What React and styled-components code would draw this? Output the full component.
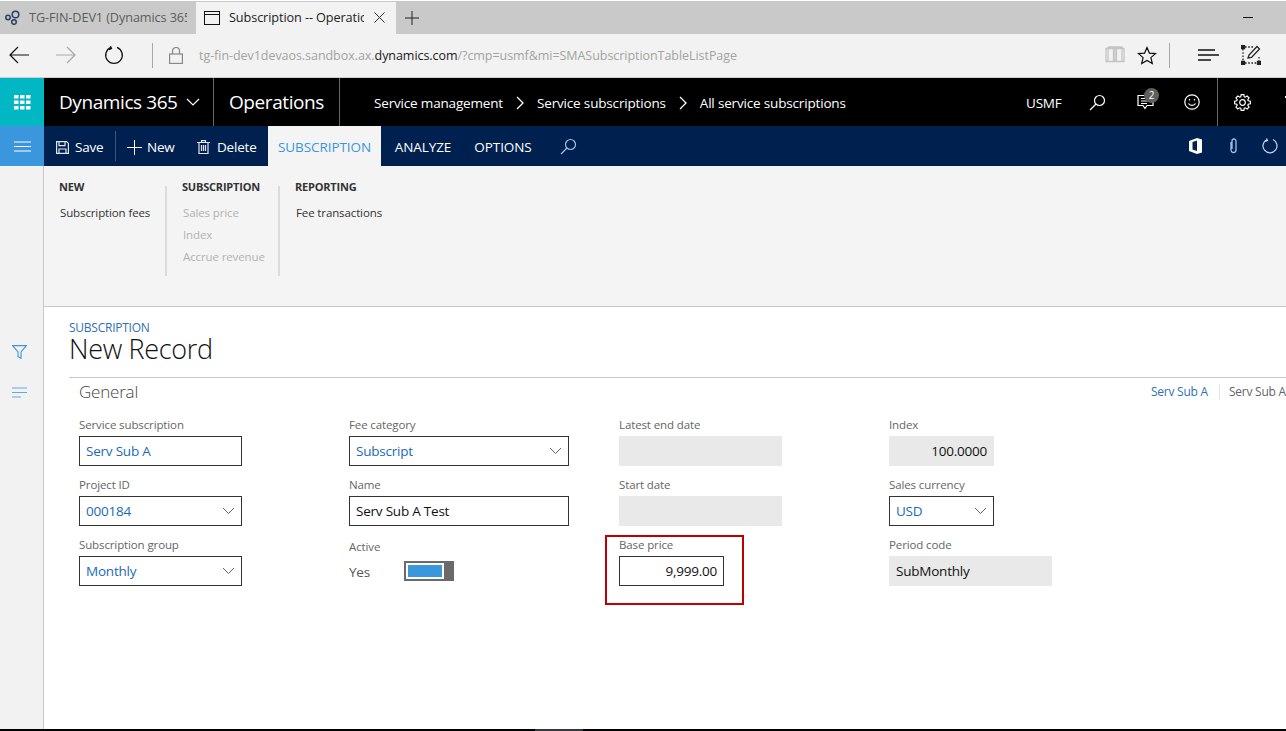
import React from 'react';
import styled, { createGlobalStyle } from 'styled-components';

const Global = createGlobalStyle`
  html, body { margin: 0; padding: 0; background: #fff; overflow: hidden; }
  body { font-family: "Open Sans", "Liberation Sans", sans-serif; }
  * { box-sizing: border-box; }
`;

const Page = styled.div`
  width: 1286px; height: 731px; display: flex; flex-direction: column; overflow: hidden; background: #fff;
`;

/* Browser chrome */
const TabStrip = styled.div`
  height: 33px; flex: none; margin-top: 1px; background: #c9c9c9; display: flex; align-items: center; position: relative;
`;
const BrowserTab = styled.div`
  height: 32px; width: ${p => p.$w}px; flex: none; display: flex; align-items: center; padding-left: ${p => p.$pad}px;
  background: ${p => (p.$active ? '#f2f2f2' : 'transparent')};
  color: ${p => (p.$active ? '#222' : '#5c5c5c')};
`;
const TabTitle = styled.span`
  width: ${p => p.$w}px; margin: -2px 0 0 ${p => p.$ml}px; overflow: hidden; white-space: nowrap;
  font-size: 12.7px; letter-spacing: -0.1px;
`;
const TabClose = styled.span`
  margin-left: 10px; display: flex;
`;
const NewTab = styled.span`
  margin-left: 9px; display: flex;
`;
const Minimize = styled.span`
  margin-left: auto; margin-right: 33px; width: 10px; height: 1px; background: #111;
`;
const NavBar = styled.div`
  height: 45px; flex: none; background: #f2f2f2; border-bottom: 1px solid #cfcfcf; display: flex; align-items: center; margin-top: -1px; padding-right: 25px;
`;
const NavSlot = styled.span`
  width: ${p => p.$w}px; flex: none; display: flex; justify-content: center; align-items: center;
`;
const NavSep = styled.span`
  width: 1px; height: 25px; background: #a8a8a8; flex: none; margin: ${p => p.$m};
`;
const Url = styled.div`
  flex: 1; font-size: 12.5px; color: #a3a3a3; letter-spacing: -0.05px; white-space: nowrap;
  b { font-weight: 400; color: #1a1a1a; }
`;

/* Dark app bars */
const AppBar = styled.div`
  height: 48px; flex: none; background: #000; color: #fff; display: flex; align-items: stretch;
`;
const Waffle = styled.div`
  width: 44px; flex: none; background: #00b7c3; display: flex; align-items: center; justify-content: center;
`;
const AppCell = styled.div`
  width: ${p => p.$w}px; flex: none; display: flex; align-items: center; padding-left: ${p => p.$pad}px;
  font-size: 19px; letter-spacing: -0.42px; border-right: 1px solid #666; white-space: nowrap;
`;
const Crumbs = styled.div`
  display: flex; align-items: center; padding: 2px 0 0 34px; font-size: 13.5px; letter-spacing: -0.17px; white-space: nowrap; flex: 1;
`;
const CrumbArrow = styled.span`
  display: flex; width: 34px; justify-content: center;
`;
const AppRight = styled.div`
  display: flex; align-items: center; width: 260px; flex: none; overflow: hidden;
`;
const AppText = styled.span`
  width: 40px; font-size: 13.5px; letter-spacing: -0.2px; flex: none; padding-top: 2px;
`;
const AppIcon = styled.span`
  width: ${p => p.$w}px; margin-left: ${p => p.$ml || 0}px; flex: none; display: flex; justify-content: center; align-self: center; position: relative;
`;
const Badge = styled.span`
  position: absolute; left: 16px; top: -6px; width: 15px; height: 15px; border-radius: 50%; background: #5f5f5f;
  color: #fff; font-size: 10px; line-height: 15px; text-align: center;
`;
const AppSep = styled.span`
  width: 1px; align-self: stretch; background: #666; flex: none;
`;

const ActionBar = styled.div`
  height: 40px; flex: none; background: #002050; color: #fff; display: flex; align-items: stretch;
`;
const Hamburger = styled.div`
  width: 44px; flex: none; background: #3a96dd; display: flex; align-items: center; justify-content: center;
`;
const Action = styled.div`
  display: flex; align-items: center; width: ${p => p.$w}px; flex: none; font-size: 13.5px; letter-spacing: -0.2px; padding: 2px 0 0 ${p => p.$pad}px; gap: ${p => p.$gap}px;
`;
const ActionSep = styled.span`
  width: 1px; height: 30px; align-self: center; background: #3d5578; flex: none;
`;
const PageTab = styled.div`
  width: ${p => p.$w}px; flex: none; display: flex; align-items: center; justify-content: center; font-size: 13.5px; letter-spacing: -0.08px; padding-top: 2px;
  background: ${p => (p.$active ? '#f4f4f4' : 'transparent')};
  color: ${p => (p.$active ? '#3a96dd' : '#fff')};
`;
const ActionRight = styled.div`
  margin-left: auto; display: flex; align-items: center;
`;

/* Body */
const Body = styled.div`
  flex: 1; display: flex; min-height: 0;
`;
const Rail = styled.div`
  width: 44px; flex: none; background: #f2f2f2; border-right: 1px solid #c8c8c8; display: flex; flex-direction: column; align-items: center; padding: 179px 5px 0 0; gap: 28px;
`;
const Main = styled.div`
  flex: 1; min-width: 0; display: flex; flex-direction: column; overflow: hidden;
`;
const Ribbon = styled.div`
  height: 141px; flex: none; background: #f4f4f4; border-bottom: 1px solid #c8c8c8; display: flex; padding: 20px 0 0 15px; align-items: flex-start;
`;
const RibbonGroup = styled.div`
  width: ${p => p.$w}px; height: 90px; flex: none; padding-left: ${p => p.$pad}px;
  border-right: ${p => (p.$sep ? '2px solid #dcdcdc' : 'none')};
`;
const RibbonHead = styled.div`
  font-size: 11px; font-weight: 700; color: #333; line-height: 16px; height: 23px; margin-top: -7px; letter-spacing: -0.2px;
`;
const RibbonItem = styled.div`
  font-size: 11.5px; line-height: 22px; letter-spacing: -0.12px; padding-left: 1px; white-space: nowrap;
  color: ${p => (p.$off ? '#b2b2b2' : '#333')};
`;
const Content = styled.div`
  flex: 1; padding: 14px 0 0 25px; position: relative;
`;
const Kicker = styled.div`
  font-size: 12px; line-height: 13px; height: 13px; color: #2f6fb7; letter-spacing: -0.25px;
`;
const Title = styled.h1`
  margin: 0; font-size: 27px; font-weight: 300; line-height: 30px; color: #111; height: 43px; letter-spacing: -0.33px;
`;
const SectionHead = styled.div`
  border-top: 1px solid #c8c8c8; height: 39px; display: flex; align-items: flex-start; padding: 0 0 0 10px; white-space: nowrap;
`;
const SectionTitle = styled.div`
  font-size: 17px; line-height: 28px; color: #444; flex: 1; font-weight: 300; letter-spacing: -0.2px;
`;
const Summary = styled.span`
  font-size: 12px; line-height: 16px; margin-top: 6px; letter-spacing: -0.25px; color: ${p => (p.$muted ? '#666' : '#2f6fb7')};
  width: ${p => p.$w}px; flex: none; overflow: hidden; padding-left: ${p => p.$pad || 1}px;
  border-left: ${p => (p.$sep ? '1px solid #e4e4e4' : 'none')};
`;
const FormGrid = styled.div`
  display: grid; grid-template-columns: repeat(4, 270px); grid-auto-rows: 60px; padding-left: 10px;
`;
const Cell = styled.div`
  position: relative;
`;
const Label = styled.div`
  font-size: 11.5px; line-height: 18px; height: 20px; color: #666; letter-spacing: -0.12px;
  padding-top: ${p => (p.$low ? '2px' : '0')};
`;
const Field = styled.div`
  width: ${p => p.$w}px; height: 30px; display: flex; align-items: center; justify-content: space-between;
  padding: 0 6px; font-size: 13.5px; letter-spacing: -0.22px;
  border: ${p => (p.$readonly ? 'none' : '1px solid #333')};
  background: ${p => (p.$readonly ? '#e9e9e9' : '#fff')};
  color: ${p => (p.$link ? '#1a6bb8' : '#111')};
  ${p => (p.$readonly ? 'padding: 0 7px;' : '')}
  ${p => (p.$right ? 'justify-content: flex-end;' : '')}
`;
const ToggleRow = styled.div`
  display: flex; align-items: center; height: 30px; font-size: 13.5px; color: #555; letter-spacing: -0.2px; margin-top: 1px;
`;
const YesText = styled.span`
  width: 55px; flex: none;
`;
const ToggleTrack = styled.div`
  width: 50px; height: 20px; background: #6a6a6a; flex: none; display: flex; margin-top: -2px;
`;
const ToggleInner = styled.div`
  width: 38px; height: 16px; margin: 2px 0 2px 2px; background: #fff; padding: 2px;
`;
const ToggleFill = styled.div`
  height: 100%; background: #3a96dd;
`;
const Highlight = styled.div`
  position: absolute; left: -14px; top: -1px; width: 139px; height: 70px; border: 2px solid #c00000; pointer-events: none;
`;
const BottomBar = styled.div`
  height: 2px; flex: none; display: flex; background: #000;
`;
const BottomThumb = styled.span`
  width: 48px; margin-left: 535px; background: #33363b;
`;

/* Drawings */
const Svg = ({ w, h, children, stroke = 'currentColor', sw = 1.2, fill = 'none' }) => (
  <svg width={w} height={h} viewBox={`0 0 ${w} ${h}`} fill={fill} stroke={stroke} strokeWidth={sw}>{children}</svg>
);
const Chevron = () => (
  <Svg w={13} h={8} stroke="#666" sw={1}><path d="M1 1l5.500 5.500L12 1" /></Svg>
);
const Search = ({ stroke = '#fff' }) => (
  <Svg w={17} h={17} stroke={stroke} sw={1.2}><circle cx="10.500" cy="6.500" r="5" /><path d="M7 10L1 16" /></Svg>
);
const gearPath = () => {
  const pts = [];
  for (let i = 0; i < 8; i++) {
    const a = (i * Math.PI) / 4;
    [[-0.3, 6], [-0.17, 8], [0.17, 8], [0.3, 6]].forEach(([d, r]) => {
      pts.push(`${(8.500 + r * Math.cos(a + d)).toFixed(2)} ${(8.500 + r * Math.sin(a + d)).toFixed(2)}`);
    });
  }
  return `M${pts.join('L')}Z`;
};

const Select = ({ w, children }) => (
  <Field $w={w} $link>{children}<Chevron /></Field>
);

export default function App() {
  return (
    <Page>
      <Global />
      <TabStrip>
        <BrowserTab $w={196} $pad={5}>
          <Svg w={15} h={15} stroke="#2c3e66" sw={1.5}>
            <circle cx="10.500" cy="4.500" r="3.300" /><circle cx="3" cy="7.500" r="2.200" /><circle cx="9" cy="12" r="2.300" />
          </Svg>
          <TabTitle $w={158} $ml={9}>TG-FIN-DEV1 (Dynamics 365 for Operations)</TabTitle>
        </BrowserTab>
        <BrowserTab $w={200} $pad={8} $active>
          <Svg w={16} h={14} stroke="#111" sw={1}><rect x="0.500" y="0.500" width="15" height="13" /><path d="M0.500 3.500h15" /></Svg>
          <TabTitle $w={135} $ml={9}>Subscription -- Operations</TabTitle>
          <TabClose><Svg w={11} h={11} stroke="#333" sw={1}><path d="M0.500 0.500l10 10M10.500 0.500l-10 10" /></Svg></TabClose>
        </BrowserTab>
        <NewTab><Svg w={14} h={14} stroke="#222" sw={1}><path d="M7 0v14M0 7h14" /></Svg></NewTab>
        <Minimize />
      </TabStrip>
      <NavBar>
        <NavSlot $w={38}><Svg w={20} h={18} stroke="#111" sw={1.2}><path d="M20 9H1M9 1L1 9l8 8" /></Svg></NavSlot>
        <NavSlot $w={56}><Svg w={20} h={18} stroke="#a8a8a8" sw={1.2}><path d="M0 9h19M11 1l8 8-8 8" /></Svg></NavSlot>
        <NavSlot $w={40}><Svg w={20} h={20} stroke="#111" sw={1.3}><path d="M7 2.400A8.300 8.300 0 1 0 13 2.400M6.500 1.200L7.500 3.500 5 4.600" /></Svg></NavSlot>
        <NavSep $m="0 0 0 18px" />
        <NavSlot $w={46}><Svg w={14} h={17} stroke="#888" sw={1.2}><rect x="0.600" y="7" width="12.800" height="9.400" /><path d="M3.500 7V4a3.500 3.500 0 0 1 7 0v3" /></Svg></NavSlot>
        <Url>tg-fin-dev1devaos.sandbox.ax.<b>dynamics.com</b>/?cmp=usmf&amp;mi=SMASubscriptionTableListPage</Url>
        <NavSlot $w={32}><Svg w={20} h={18} stroke="#c4c4c4" sw={1.3}><path d="M1 2.500h18v13H1zM3 1h14v14.500M3 1v14.500M10 1v14.500M8.500 1.500v14M11.500 1.500v14" /></Svg></NavSlot>
        <NavSlot $w={32}><Svg w={20} h={19} stroke="#111" sw={1.2}><path d="M10 1.500l2.400 5.600 6.100.5-4.600 4 1.400 6-5.300-3.200-5.300 3.200 1.400-6-4.600-4 6.100-.5z" /></Svg></NavSlot>
        <NavSep $m="0 13px 0 6px" />
        <NavSlot $w={50}><Svg w={21} h={14} stroke="#111" sw={1.3}><path d="M0 2h17M0 7h21M0 12h13" /></Svg></NavSlot>
        <NavSlot $w={8} />
        <NavSlot $w={20}><Svg w={20} h={20} stroke="#222" sw={1.3}><path d="M2 4v13M18 12v5M4 18h12M4 2h8" strokeDasharray="1.600 1.600" /><path d="M7 13l1-3 8-8.500 2.500 2.500-8 8.500z" /><path d="M0.500 0.500h3v3h-3zM0.500 16.500h3v3h-3zM16.500 16.500h3v3h-3z" fill="#222" /></Svg></NavSlot>
      </NavBar>
      <AppBar>
        <Waffle>
          <Svg w={17} h={15} stroke="none"><g fill="#fff"><rect width="4.500" height="3.500" /><rect x="6" width="4.500" height="3.500" /><rect x="12" width="4.500" height="3.500" /><rect y="5.500" width="4.500" height="3.500" /><rect x="6" y="5.500" width="4.500" height="3.500" /><rect x="12" y="5.500" width="4.500" height="3.500" /><rect y="11" width="4.500" height="3.500" /><rect x="6" y="11" width="4.500" height="3.500" /><rect x="12" y="11" width="4.500" height="3.500" /></g></Svg>
        </Waffle>
        <AppCell $w={170} $pad={15}>
          Dynamics 365
          <AppIcon $w={30}><Svg w={14} h={8} stroke="#fff" sw={1.2}><path d="M1 1l6 6 6-6" /></Svg></AppIcon>
        </AppCell>
        <AppCell $w={126} $pad={15}>Operations</AppCell>
        <Crumbs>
          Service management
          <CrumbArrow><Svg w={8} h={14} stroke="#fff" sw={1.3}><path d="M1 1l6 6-6 6" /></Svg></CrumbArrow>
          Service subscriptions
          <CrumbArrow><Svg w={8} h={14} stroke="#fff" sw={1.3}><path d="M1 1l6 6-6 6" /></Svg></CrumbArrow>
          All service subscriptions
        </Crumbs>
        <AppRight>
          <AppText>USMF</AppText>
          <AppIcon $w={62}><Search /></AppIcon>
          <AppIcon $w={34}>
            <Svg w={17} h={16} stroke="#fff" sw={1.2}><path d="M1 1.500h15v10H10l-2 3-2-3H1zM4 4.500h9M4 7h9M4 9.500h6" /></Svg>
            <Badge>2</Badge>
          </AppIcon>
          <AppIcon $w={50} $ml={5}><Svg w={16} h={16} stroke="#fff" sw={1.2}><circle cx="8" cy="8" r="7.200" /><path d="M4.500 9.500c1.500 2.500 5.500 2.500 7 0M5.500 5v1.500M10.500 5v1.500" /></Svg></AppIcon>
          <AppSep />
          <AppIcon $w={48}><Svg w={17} h={17} stroke="#fff" sw={1.2}><path d={gearPath()} /><circle cx="8.500" cy="8.500" r="2.800" /></Svg></AppIcon>
          <AppIcon $w={20}><Svg w={20} h={17} stroke="#fff" sw={1}><path d="M19.500 2v2" /></Svg></AppIcon>
        </AppRight>
      </AppBar>
      <ActionBar>
        <Hamburger><Svg w={17} h={11} stroke="#fff" sw={1}><path d="M0 1h17M0 5.500h17M0 10h17" /></Svg></Hamburger>
        <Action $w={71} $pad={12} $gap={6}>
          <Svg w={13} h={13} stroke="#dfe6f0" sw={1.2}><path d="M0.600 0.600h10l1.800 1.800v10H0.600zM3 0.600v4h6v-4M3 12.400V8h7v4.400" /></Svg>
          Save
        </Action>
        <ActionSep />
        <Action $w={81} $pad={11} $gap={5}>
          <Svg w={15} h={15} stroke="#fff" sw={1}><path d="M7.500 0v15M0 7.500h15" /></Svg>
          New
        </Action>
        <Action $w={71} $pad={0} $gap={7}>
          <Svg w={13} h={14} stroke="#dfe6f0" sw={1.2}><path d="M0 2.500h13M4.500 2.500V0.700h4v1.800M2 2.500v11h9v-11M4.500 5v6M6.500 5v6M8.500 5v6" /></Svg>
          Delete
        </Action>
        <PageTab $w={113} $active>SUBSCRIPTION</PageTab>
        <PageTab $w={84}>ANALYZE</PageTab>
        <PageTab $w={76}>OPTIONS</PageTab>
        <AppIcon $w={24} $ml={15}><Search stroke="#9fc0e6" /></AppIcon>
        <ActionRight>
          <AppIcon $w={34}><Svg w={13} h={16} stroke="none"><path fill="#fff" d="M0 3l8-3 5 1.500v13L8 16l-8-3zM8 2.500L3.500 4v7.500L8 13z" /></Svg></AppIcon>
          <AppIcon $w={42}><Svg w={9} h={16} stroke="#9fc0e6" sw={1.3}><path d="M2 4v8a2.500 2.500 0 0 0 5 0V3a2 2 0 0 0-4 0v8" /></Svg></AppIcon>
          <AppIcon $w={32}><Svg w={16} h={16} stroke="#bcd6f2" sw={1.2}><path d="M5 1.500A7 7 0 1 0 11 1.500M4.500 0.500L5.500 2.500 3.500 3.500" /></Svg></AppIcon>
        </ActionRight>
      </ActionBar>
      <Body>
        <Rail>
          <Svg w={15} h={14} stroke="#3a96dd" sw={1.1}><path d="M0.600 0.600h13.800L9 7v6.400L6 11.500V7z" /></Svg>
          <Svg w={15} h={11} stroke="#62a9e4" sw={1.1}><path d="M0 1h15M0 5.500h15M0 10h9" /></Svg>
        </Rail>
        <Main>
          <Ribbon>
            <RibbonGroup $w={108} $sep>
              <RibbonHead>NEW</RibbonHead>
              <RibbonItem>Subscription fees</RibbonItem>
            </RibbonGroup>
            <RibbonGroup $w={113} $pad={15} $sep>
              <RibbonHead>SUBSCRIPTION</RibbonHead>
              <RibbonItem $off>Sales price</RibbonItem>
              <RibbonItem $off>Index</RibbonItem>
              <RibbonItem $off>Accrue revenue</RibbonItem>
            </RibbonGroup>
            <RibbonGroup $w={150} $pad={15}>
              <RibbonHead>REPORTING</RibbonHead>
              <RibbonItem>Fee transactions</RibbonItem>
            </RibbonGroup>
          </Ribbon>
          <Content>
            <Kicker>SUBSCRIPTION</Kicker>
            <Title>New Record</Title>
            <SectionHead>
              <SectionTitle>General</SectionTitle>
              <Summary $w={69}>Serv Sub A</Summary>
              <Summary $w={67} $pad={9} $sep $muted>Serv Sub A</Summary>
            </SectionHead>
            <FormGrid>
              <Cell><Label>Service subscription</Label><Field $w={163} $link>Serv Sub A</Field></Cell>
              <Cell><Label>Fee category</Label><Select w={220}>Subscript</Select></Cell>
              <Cell><Label>Latest end date</Label><Field $w={163} $readonly /></Cell>
              <Cell><Label>Index</Label><Field $w={105} $readonly $right>100.0000</Field></Cell>
              <Cell><Label>Project ID</Label><Select w={163}>000184</Select></Cell>
              <Cell><Label>Name</Label><Field $w={220}>Serv Sub A Test</Field></Cell>
              <Cell><Label>Start date</Label><Field $w={163} $readonly /></Cell>
              <Cell><Label>Sales currency</Label><Select w={105}>USD</Select></Cell>
              <Cell><Label>Subscription group</Label><Select w={163}>Monthly</Select></Cell>
              <Cell>
                <Label $low>Active</Label>
                <ToggleRow>
                  <YesText>Yes</YesText>
                  <ToggleTrack><ToggleInner><ToggleFill /></ToggleInner></ToggleTrack>
                </ToggleRow>
              </Cell>
              <Cell>
                <Label>Base price</Label>
                <Field $w={105} $right>9,999.00</Field>
                <Highlight />
              </Cell>
              <Cell><Label>Period code</Label><Field $w={163} $readonly>SubMonthly</Field></Cell>
            </FormGrid>
          </Content>
        </Main>
      </Body>
      <BottomBar><BottomThumb /></BottomBar>
    </Page>
  );
}
